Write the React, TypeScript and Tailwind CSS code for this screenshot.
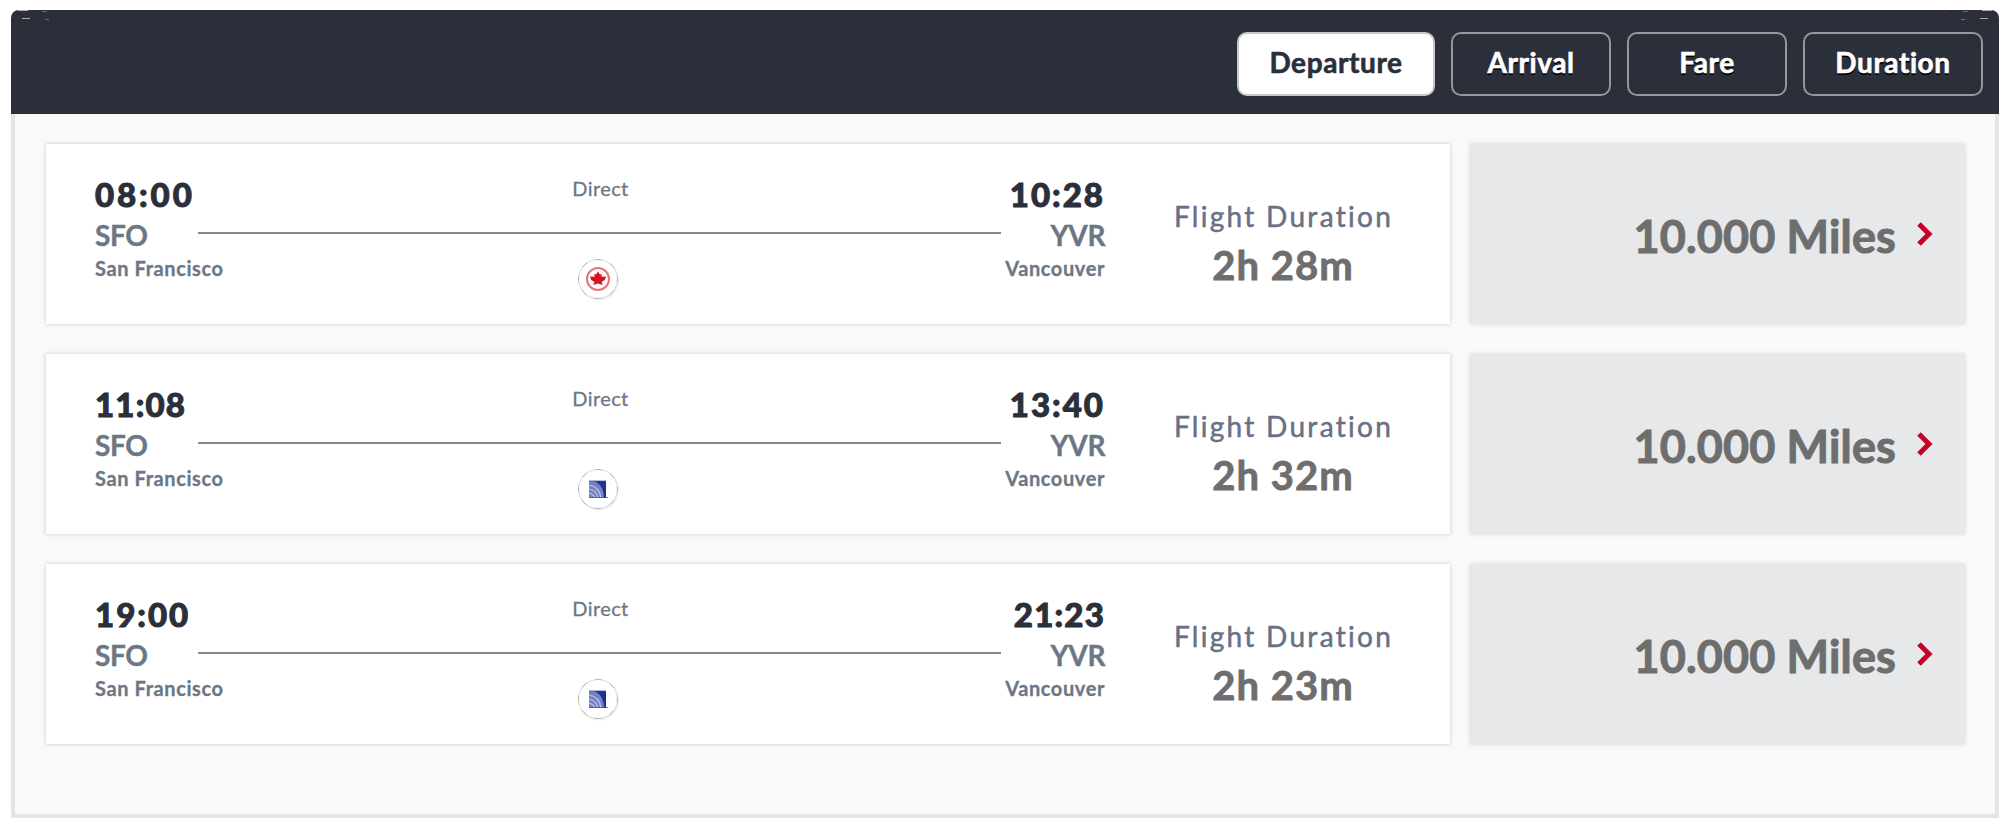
type Carrier = "maple" | "globe";

type Flight = {
  depart: string;
  departSpacing: string;
  arrive: string;
  arriveSpacing: string;
  duration: string;
  carrier: Carrier;
};

const FLIGHTS: Flight[] = [
  {
    depart: "08:00",
    departSpacing: "tracking-[2.9px]",
    arrive: "10:28",
    arriveSpacing: "tracking-[2px]",
    duration: "2h 28m",
    carrier: "maple",
  },
  {
    depart: "11:08",
    departSpacing: "tracking-[1.2px]",
    arrive: "13:40",
    arriveSpacing: "tracking-[2px]",
    duration: "2h 32m",
    carrier: "globe",
  },
  {
    depart: "19:00",
    departSpacing: "tracking-[2px]",
    arrive: "21:23",
    arriveSpacing: "tracking-[1.2px]",
    duration: "2h 23m",
    carrier: "globe",
  },
];

const SORTS = [
  { label: "Departure", width: "w-[198px]", active: true },
  { label: "Arrival", width: "w-[160px]", active: false },
  { label: "Fare", width: "w-[160px]", active: false },
  { label: "Duration", width: "w-[180px]", active: false },
];

export default function App() {
  return (
    <div className="h-[828px] bg-white pt-[10px] pl-[11px] font-['Lato',sans-serif]">
      <div className="w-[1988px] h-[808px] flex flex-col">
        <div className="relative h-[104px] shrink-0 bg-[#2b2f3a] rounded-t-[8px] flex justify-end gap-4 pt-[22px] pr-4">
          <HeaderTicks className="absolute left-0 top-0" />
          <HeaderTicks className="absolute right-0 top-0 -scale-x-100" />
          {SORTS.map((s) => (
            <button
              key={s.label}
              className={`h-16 rounded-[10px] border-2 text-[28px] leading-[56px] font-bold tracking-[0.6px] pb-1 [-webkit-text-stroke:0.6px_currentColor] ${s.width} ${
                s.active
                  ? "bg-white border-[#c8c8c8] text-[#2b2f3a]"
                  : "border-[#96979d] text-white [text-shadow:0_2px_0_#000]"
              }`}
            >
              {s.label}
            </button>
          ))}
        </div>
        <div className="flex-1 bg-[#f9f9f9] border-4 border-t-0 border-[#e4e4e4] pt-[30px] pl-[31px] flex flex-col gap-[30px]">
          {FLIGHTS.map((f) => (
            <FlightRow key={f.depart} flight={f} />
          ))}
        </div>
      </div>
    </div>
  );
}

function FlightRow({ flight }: { flight: Flight }) {
  return (
    <div className="flex gap-5 h-[180px]">
      <div className="w-[1404px] bg-white shadow-[0_0_4px_rgba(0,0,0,0.2)] flex pl-[49px]">
        <div className="w-[103px] shrink-0 pt-[30px]">
          <Stop time={flight.depart} spacing={flight.departSpacing} code="SFO" city="San Francisco" />
        </div>
        <div className="w-[803px] shrink-0 flex flex-col items-center pt-[32px]">
          <div className="text-[20px] leading-6 tracking-[0.4px] ml-[2px] text-[#6c7786] [-webkit-text-stroke:0.3px_currentColor]">
            Direct
          </div>
          <div className="w-full h-[2px] bg-[#888] mt-[32px] mb-[23px]" />
          <CarrierBadge carrier={flight.carrier} />
        </div>
        <div className="w-[104px] shrink-0 pt-[30px] flex flex-col items-end">
          <Stop time={flight.arrive} spacing={flight.arriveSpacing} code="YVR" city="Vancouver" />
        </div>
        <div className="flex-1 pl-[12px] flex flex-col items-center pt-[55px]">
          <div className="text-[28px] leading-[34px] tracking-[2.3px] text-[#687086] [-webkit-text-stroke:0.5px_currentColor]">
            Flight Duration
          </div>
          <div className="text-[40px] leading-[48px] font-bold tracking-[1px] text-[#6e6e6e] mt-[8px] -ml-[1px] [-webkit-text-stroke:0.8px_currentColor]">
            {flight.duration}
          </div>
        </div>
      </div>
      <div className="w-[495px] bg-[#e7e8ea] shadow-[0_0_4px_rgba(0,0,0,0.15)] flex justify-end pt-[65px] pr-[31px]">
        <span className="text-[45px] leading-[54px] font-bold tracking-[0.15px] text-[#6e6e6e] [-webkit-text-stroke:1px_currentColor]">
          10.000 Miles
        </span>
        <svg className="ml-5 mt-[11px]" width="18" height="28" viewBox="0 0 18 28" fill="none">
          <path d="M3 4l10 10L3 24" stroke="#c4002b" strokeWidth="5" />
        </svg>
      </div>
    </div>
  );
}

function Stop({
  time,
  spacing,
  code,
  city,
}: {
  time: string;
  spacing: string;
  code: string;
  city: string;
}) {
  return (
    <>
      <div
        className={`text-[33px] leading-[40px] font-black text-[#2b2f3a] whitespace-nowrap [-webkit-text-stroke:1px_currentColor] ${spacing}`}
      >
        {time}
      </div>
      <div className="text-[28px] leading-[34px] font-bold tracking-[-0.4px] text-[#6c7786] mt-[4px] [-webkit-text-stroke:0.4px_currentColor]">
        {code}
      </div>
      <div className="text-[20px] leading-[24px] font-bold tracking-[0.6px] text-[#6c7786] mt-[4px] whitespace-nowrap [-webkit-text-stroke:0.3px_currentColor]">
        {city}
      </div>
    </>
  );
}

function CarrierBadge({ carrier }: { carrier: Carrier }) {
  return (
    <svg className="-ml-[3px]" width="44" height="44" viewBox="0 0 44 44">
      <circle cx="23" cy="23.5" r="20" fill="#f1f1f1" />
      <circle cx="22" cy="22" r="19.5" fill="#fff" stroke="#d8d8d8" />
      <circle cx="22" cy="22" r="19.5" fill="none" stroke="#b5b5b5" strokeDasharray="6 9.3" strokeDashoffset="3" />
      {carrier === "maple" ? (
        <>
          <circle cx="22" cy="22" r="11" fill="none" stroke="#e4737b" strokeWidth="2" />
          <path
            d="M22 14.5l2 3 1.8-.6-.4 2.8 4.6-.2-1.2 3.4-3.3 2.1 1.4 3-4.9-1.5-4.9 1.5 1.4-3-3.3-2.1-1.2-3.4 4.6.2-.4-2.8 1.8.6z"
            fill="#d8101f"
          />
        </>
      ) : (
        <>
          <rect x="13" y="14" width="17" height="17" fill="#7482c4" />
          <path d="M18 14h12v17h-2c0-8-3-14-10-17z" fill="#1c2f93" />
          <path
            d="M13 18c7 1 11 6 12 13M13 22c5 1 8 4 9 9M13 26c3 1 5 2 6 5"
            fill="none"
            stroke="#c3caea"
            strokeWidth="1.2"
          />
          <path d="M13 14h17M13 30.5h19" stroke="#4154a8" strokeWidth="0.8" />
        </>
      )}
    </svg>
  );
}

function HeaderTicks({ className }: { className: string }) {
  return (
    <svg className={className} width="60" height="12" viewBox="0 0 60 12">
      <path d="M7 .5h10M11 8.5h8" stroke="#a9abb1" />
      <path d="M31 1.5h5M34 9.5h4" stroke="#6b6e77" />
      <path d="M54 2.5h1M56 10.5h1" stroke="#4c4f59" />
    </svg>
  );
}
